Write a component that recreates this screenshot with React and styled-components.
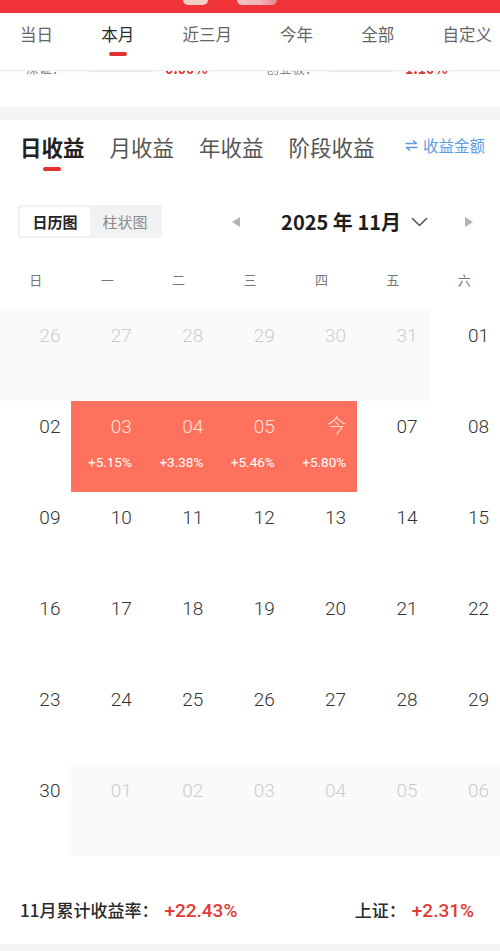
import styled, { createGlobalStyle } from 'styled-components';

const GlobalStyle = createGlobalStyle`
    * { box-sizing: border-box; }
    body {
        margin: 0;
        background: #ffffff;
        font-family: "Noto Sans CJK SC", "Noto Sans", sans-serif;
        color: #333333;
    }
`;

const periods = ["当日", "本月", "近三月", "今年", "全部", "自定义"];
const profitTabs = ["日收益", "月收益", "年收益", "阶段收益"];
const weekdays = ["日", "一", "二", "三", "四", "五", "六"];

// kind: "other" (outside month), "day", "hit" (has a return)
const weeks = [
    [["26", "other"], ["27", "other"], ["28", "other"], ["29", "other"], ["30", "other"], ["31", "other"], ["01", "day"]],
    [["02", "day"], ["03", "hit", "+5.15%"], ["04", "hit", "+3.38%"], ["05", "hit", "+5.46%"], ["今", "hit", "+5.80%"], ["07", "day"], ["08", "day"]],
    [["09", "day"], ["10", "day"], ["11", "day"], ["12", "day"], ["13", "day"], ["14", "day"], ["15", "day"]],
    [["16", "day"], ["17", "day"], ["18", "day"], ["19", "day"], ["20", "day"], ["21", "day"], ["22", "day"]],
    [["23", "day"], ["24", "day"], ["25", "day"], ["26", "day"], ["27", "day"], ["28", "day"], ["29", "day"]],
    [["30", "day"], ["01", "other"], ["02", "other"], ["03", "other"], ["04", "other"], ["05", "other"], ["06", "other"]],
];

export default function App() {
    return (
        <>
            <GlobalStyle />
            <Page>
                <StatusStrip>
                    <Blob width={25} color="#f2cfc6" />
                    <Blob width={40} color="linear-gradient(90deg, #f6c3c6 0%, #f3b2b7 60%, #e9858d 100%)" />
                </StatusStrip>

                <PeriodBar>
                    {periods.map((p) => (
                        <PeriodTab key={p} active={p === "本月"}>
                            <span>{p}</span>
                            <Indicator active={p === "本月"} />
                        </PeriodTab>
                    ))}
                </PeriodBar>

                {/* index row scrolled up under the sticky period bar */}
                <IndexPeek>
                    <PeekInner>
                        <PeekItem>
                            <PeekLabel>深证：</PeekLabel>
                            <Dot />
                            <PeekBar />
                            <PeekValue>0.00%</PeekValue>
                        </PeekItem>
                        <PeekItem>
                            <PeekLabel>创业板：</PeekLabel>
                            <Dot />
                            <PeekBar />
                            <PeekValue>1.10%</PeekValue>
                        </PeekItem>
                    </PeekInner>
                </IndexPeek>

                <Band />

                <Panel>
                    <ProfitBar>
                        {profitTabs.map((t, i) => (
                            <ProfitTab key={t} active={i === 0}>
                                <span>{t}</span>
                                <Indicator active={i === 0} />
                            </ProfitTab>
                        ))}
                        <SwitchLink>
                            <svg width="13" height="11" viewBox="0 0 13 11" fill="none" stroke="#5b9be0" strokeWidth="1.4" strokeLinecap="round" strokeLinejoin="round">
                                <path d="M1 3.5h10.5L8.5 0.8" />
                                <path d="M12 7.5H1.5l3 2.7" />
                            </svg>
                            收益金额
                        </SwitchLink>
                    </ProfitBar>

                    <Toolbar>
                        <Segmented>
                            <Segment active>日历图</Segment>
                            <Segment>柱状图</Segment>
                        </Segmented>
                        <MonthNav>
                            <Arrow dir="left" />
                            <MonthTitle>2025 年 11月</MonthTitle>
                            <svg width="17" height="10" viewBox="0 0 17 10" fill="none" stroke="#555" strokeWidth="1.6" strokeLinecap="round" strokeLinejoin="round">
                                <path d="M1.5 1.5l7 7 7-7" />
                            </svg>
                            <Arrow dir="right" />
                        </MonthNav>
                    </Toolbar>

                    <WeekRow>
                        {weekdays.map((w) => <WeekCell key={w}>{w}</WeekCell>)}
                    </WeekRow>

                    <Calendar>
                        {weeks.flat().map(([label, kind, pct], i) => (
                            <DayCell key={i} kind={kind}>
                                <DayNum kind={kind}>{label}</DayNum>
                                {pct && <DayPct>{pct}</DayPct>}
                            </DayCell>
                        ))}
                    </Calendar>

                    <Summary>
                        <SumItem>
                            11月累计收益率：<RedValue>+22.43%</RedValue>
                        </SumItem>
                        <SumItem>
                            上证：<RedValue>+2.31%</RedValue>
                        </SumItem>
                    </Summary>
                </Panel>

                <Band short />
            </Page>
        </>
    );
}

const Page = styled.div`
    width: 500px;
    overflow: hidden;
`;

const StatusStrip = styled.div`
    height: 13px;
    background: #f03338;
    display: flex;
    align-items: flex-start;
    gap: 29px;
    padding-left: 183px;
`;

const Blob = styled.div`
    width: ${(p) => p.width}px;
    height: 5px;
    background: ${(p) => p.color};
    border-radius: 0 0 7px 7px;
    filter: blur(0.4px);
`;

const PeriodBar = styled.div`
    height: 58px;
    display: flex;
    justify-content: space-between;
    padding: 10px 8px 0 20px;
    border-bottom: 1px solid #ededed;
    box-shadow: 0 1px 2px rgba(0, 0, 0, 0.04);
    position: relative;
    z-index: 1;
    background: #fff;
`;

const PeriodTab = styled.div`
    display: flex;
    flex-direction: column;
    align-items: center;
    font-size: 16.5px;
    line-height: 22px;
    color: ${(p) => (p.active ? "#2a2a2a" : "#666666")};
`;

const Indicator = styled.div`
    width: 18px;
    height: 4px;
    border-radius: 2px;
    margin-top: 7px;
    background: ${(p) => (p.active ? "#e0312f" : "transparent")};
`;

const IndexPeek = styled.div`
    height: 36px;
    overflow: hidden;
    background: #fff;
`;

const PeekInner = styled.div`
    display: flex;
    margin-top: -11px;
    padding-left: 26px;
    gap: 58px;
    filter: blur(0.6px);
`;

const PeekItem = styled.div`
    display: flex;
    align-items: center;
    font-size: 13px;
    line-height: 16px;
    color: #888;
    width: 182px;
    flex-shrink: 0;
    white-space: nowrap;
`;

const PeekLabel = styled.span`
    width: 58px;
    flex-shrink: 0;
`;

const Dot = styled.div`
    width: 3px;
    height: 6px;
    background: #e0312f;
    flex-shrink: 0;
`;

const PeekBar = styled.div`
    width: 64px;
    height: 4px;
    background: #ececec;
    margin: 4px 12px 0 2px;
    flex-shrink: 0;
`;

const PeekValue = styled.span`
    color: #e0312f;
    font-size: 14px;
    font-weight: bold;
`;

const Band = styled.div`
    height: ${(p) => (p.short ? 7 : 13)}px;
    background: #f5f5f5;
`;

const Panel = styled.div`
    background: #fff;
`;

const ProfitBar = styled.div`
    display: flex;
    align-items: flex-start;
    gap: 25px;
    padding: 13px 15px 0 20px;
`;

const ProfitTab = styled.div`
    display: flex;
    flex-direction: column;
    align-items: center;
    font-size: 21.5px;
    line-height: 28px;
    font-weight: ${(p) => (p.active ? 700 : 400)};
    color: ${(p) => (p.active ? "#222222" : "#555555")};

    div {
        margin-top: 6px;
    }
`;

const SwitchLink = styled.div`
    margin-left: auto;
    display: flex;
    align-items: center;
    gap: 5px;
    font-size: 15.5px;
    line-height: 22px;
    margin-top: 1px;
    color: #5b9be0;
`;

const Toolbar = styled.div`
    display: flex;
    align-items: center;
    margin-top: 34px;
    padding: 0 27px 0 18px;
`;

const Segmented = styled.div`
    display: flex;
    height: 33px;
    padding: 2px;
    background: #f2f2f2;
    border-radius: 3px;
`;

const Segment = styled.div`
    width: 70px;
    display: flex;
    align-items: center;
    justify-content: center;
    font-size: 15px;
    border-radius: 2px;
    background: ${(p) => (p.active ? "#ffffff" : "transparent")};
    color: ${(p) => (p.active ? "#222222" : "#8a8a8a")};
    font-weight: ${(p) => (p.active ? 600 : 400)};
`;

const MonthNav = styled.div`
    margin-left: auto;
    display: flex;
    align-items: center;
`;

const Arrow = styled.div`
    width: 0;
    height: 0;
    border-top: 5.5px solid transparent;
    border-bottom: 5.5px solid transparent;
    ${(p) =>
        p.dir === "left"
            ? "border-right: 8px solid #b3b3b3; margin-right: 41px;"
            : "border-left: 8px solid #b3b3b3; margin-left: 37px;"}
`;

const MonthTitle = styled.div`
    font-size: 20px;
    font-weight: 700;
    color: #1e1e1e;
    line-height: 28px;
    margin-right: 10px;
`;

const WeekRow = styled.div`
    display: grid;
    grid-template-columns: repeat(7, 1fr);
    margin-top: 16px;
    height: 50px;
`;

const WeekCell = styled.div`
    display: flex;
    align-items: center;
    justify-content: center;
    font-size: 13px;
    color: #777777;
`;

const Calendar = styled.div`
    display: grid;
    grid-template-columns: repeat(7, 1fr);
    grid-auto-rows: 91px;
    margin-top: 6px;
`;

const DayCell = styled.div`
    display: flex;
    flex-direction: column;
    align-items: flex-end;
    padding: 14px 11px 0 0;
    background: ${(p) =>
        p.kind === "hit" ? "#fe725d" : p.kind === "other" ? "#fafafa" : "#ffffff"};
`;

const DayNum = styled.div`
    font-family: Roboto, "Noto Sans CJK SC", sans-serif;
    font-size: 19px;
    line-height: 24px;
    font-weight: 300;
    color: ${(p) =>
        p.kind === "hit" ? "#ffe3dc" : p.kind === "other" ? "#cccccc" : "#333333"};
`;

const DayPct = styled.div`
    font-family: Roboto, "Noto Sans", sans-serif;
    font-size: 13.5px;
    line-height: 16px;
    color: #ffffff;
    margin-top: 15px;
`;

const Summary = styled.div`
    height: 88px;
    display: flex;
    justify-content: space-between;
    padding: 42px 26px 0 20px;
`;

const SumItem = styled.div`
    font-size: 17px;
    line-height: 24px;
    font-weight: 500;
    color: #2a2a2a;
`;

const RedValue = styled.span`
    color: #e23a36;
    font-family: Roboto, "Noto Sans", sans-serif;
    font-size: 19px;
    font-weight: 500;
    margin-left: 6px;
`;
